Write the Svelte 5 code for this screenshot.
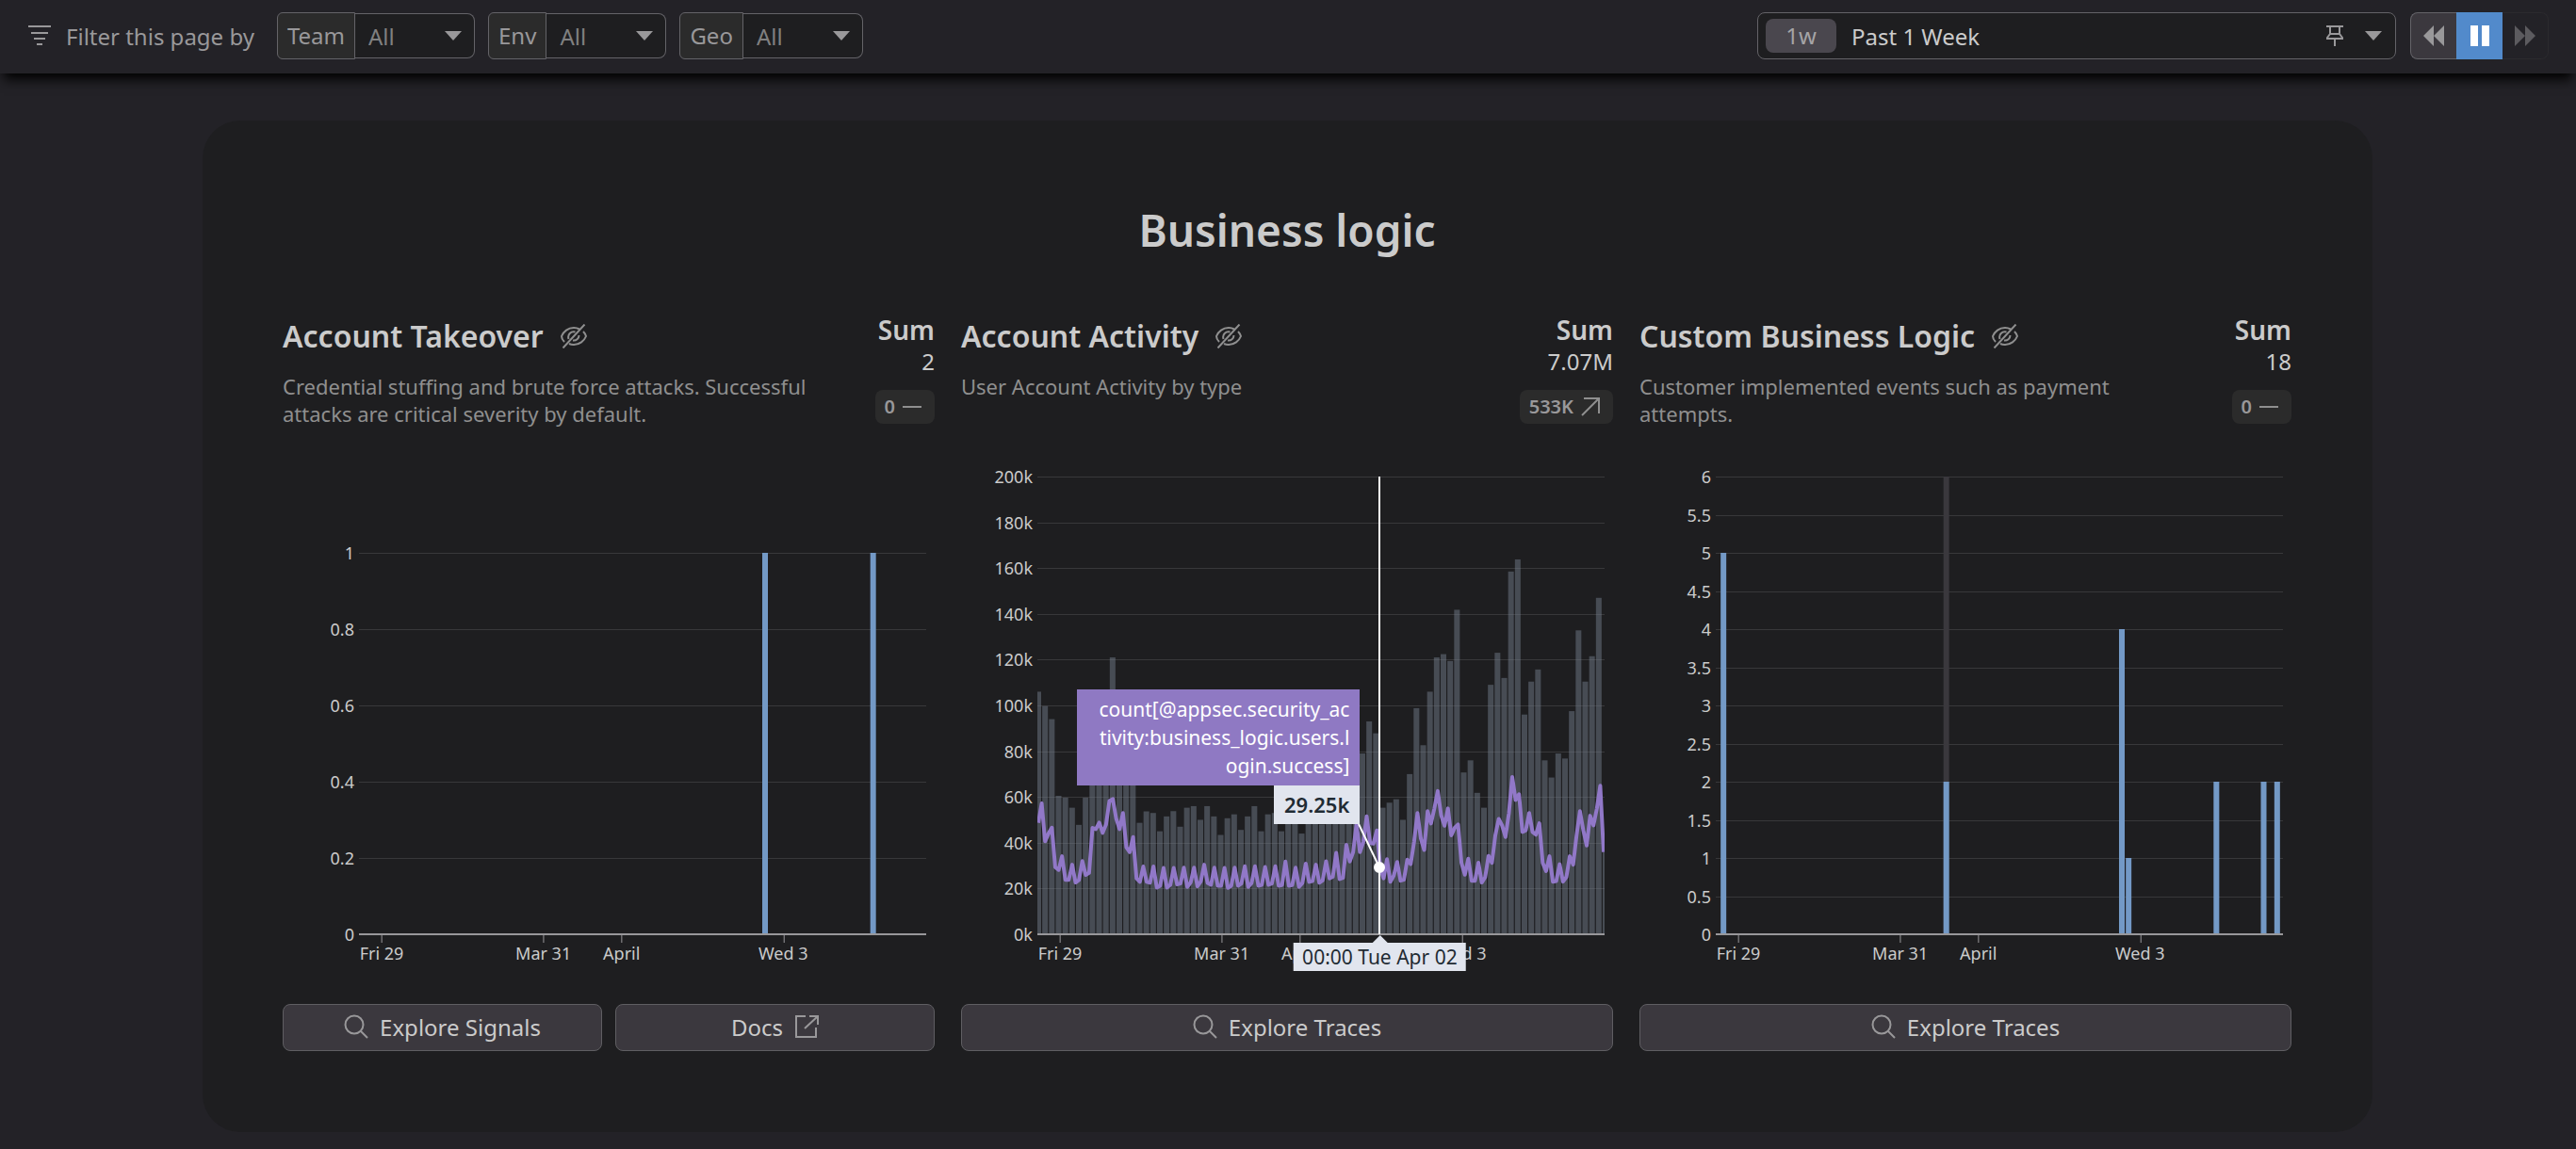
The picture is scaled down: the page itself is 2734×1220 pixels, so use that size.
<script>
  const filters = [
    { id: 'team', label: 'Team' },
    { id: 'env', label: 'Env' },
    { id: 'geo', label: 'Geo' }
  ];

  const days = [
    { label: 'Fri 29', at: 4 },
    { label: 'Mar 31', at: 32.5 },
    { label: 'April', at: 46.3 },
    { label: 'Wed 3', at: 74.8 }
  ];

  // Bar values in thousands, one per two-hour bucket.
  const activity = [
    106, 99.7, 94, 60.5, 59.7, 55.3, 47.8, 59.7, 78, 84, 92, 121, 96, 88, 74, 48.7, 53.7, 53, 45, 51.5, 53.8, 47,
    55.3, 56, 50, 56, 51.5, 43.4, 50.7, 52.4, 45.6, 51.5, 56, 45, 52.4, 53, 45, 52, 54, 44, 52, 53, 48, 54, 56, 55,
    60, 66, 79, 93, 87.8, 55.3, 57.5, 59, 50, 70, 98.8, 82.6, 106, 121, 122.4, 119.4, 141.8, 70.7, 76, 61.8, 55.3,
    109, 123, 112, 158.5, 163.8, 96, 110.4, 115.7, 76, 68.5, 79, 76.8, 97.5, 132.8, 110.4, 121.5, 147, 36
  ];

  // Successful logins in thousands, one per hour.
  const logins = [
    48.7, 57.2, 40.6, 44, 46.6, 29.3, 28.1, 34.1, 23.8, 23.8, 30.4, 22.6, 23.7, 32, 25.9, 26.8, 46.5, 45.9, 48.8,
    44.3, 47.9, 58.2, 59.1, 50.6, 45.9, 53, 38, 35.9, 42.5, 24.4, 22.9, 29.6, 22.9, 22.5, 29.6, 20.4, 21.2, 29, 20.4,
    21.6, 29, 21.8, 22.2, 29.1, 20.7, 22.6, 29.1, 20.9, 23.1, 30.4, 22.4, 21.6, 29.1, 21.2, 21.2, 29, 20.3, 21.2,
    29.1, 21.2, 22.2, 29.7, 20.7, 22.4, 29.7, 21.2, 21.6, 29.4, 21.6, 22.2, 29.7, 21.2, 21.5, 31.8, 21.2, 21.5, 29.1,
    20.7, 22.4, 30.9, 22.9, 23.2, 30.4, 22.5, 23.5, 31.9, 24.4, 25.1, 35.6, 24.1, 24.6, 39.1, 31.8, 35.9, 48.4, 35.9,
    40.3, 51.5, 39.9, 39.6, 45.4, 29.3, 24.4, 32.8, 22.9, 25.6, 31.6, 23.4, 23.8, 32.6, 30.7, 40.3, 53, 41.8, 36.8,
    53.8, 48.4, 55, 62.6, 52, 47.4, 55, 43.2, 46.5, 48, 31.2, 26, 33, 23.4, 23.4, 31.3, 22.6, 24.9, 34.3, 31.2, 43.2,
    50.4, 47.6, 42.5, 52.8, 68.7, 58.7, 61.2, 44.7, 45.4, 53, 44.7, 43.5, 48.5, 31.2, 27.6, 34.1, 22.9, 23.2, 30.6,
    23, 25, 34.1, 30.4, 43.2, 53.8, 45.4, 38.8, 51.8, 47.6, 55, 64.9, 35.9
  ];

  const cards = [
    {
      title: 'Account Takeover',
      text: 'Credential stuffing and brute force attacks. Successful attacks are critical severity by default.',
      sum: '2',
      delta: '0',
      trend: 'flat',
      max: 1.2,
      ticks: ['', '1', '0.8', '0.6', '0.4', '0.2', '0'],
      bars: [[60, 1], [76, 1]],
      actions: [
        { label: 'Explore Signals', icon: 'search' },
        { label: 'Docs', icon: 'external' }
      ]
    },
    {
      title: 'Account Activity',
      text: 'User Account Activity by type',
      sum: '7.07M',
      delta: '533K',
      trend: 'up',
      max: 200,
      ticks: ['200k', '180k', '160k', '140k', '120k', '100k', '80k', '60k', '40k', '20k', '0k'],
      bars: activity.map((v, k) => [k, v]),
      muted: true,
      line: logins,
      actions: [{ label: 'Explore Traces', icon: 'search' }]
    },
    {
      title: 'Custom Business Logic',
      text: 'Customer implemented events such as payment attempts.',
      sum: '18',
      delta: '0',
      trend: 'flat',
      max: 6,
      ticks: ['6', '5.5', '5', '4.5', '4', '3.5', '3', '2.5', '2', '1.5', '1', '0.5', '0'],
      bars: [[1, 5], [34, 2], [60, 4], [61, 1], [74, 2], [81, 2], [83, 2]],
      hover: 34,
      actions: [{ label: 'Explore Traces', icon: 'search' }]
    }
  ];

  const W = 601;
  const H = 486;
  const PITCH = W / 84;
  const barX = (k) => k * PITCH - 2;
  const linePoints = (values, max) =>
    values.map((v, i) => `${1 + (i * (W - 2)) / (values.length - 1)},${H - (v / max) * H}`).join(' ');
</script>

{#snippet caret()}
  <svg class="caret" width="18" height="10" viewBox="0 0 18 10" aria-hidden="true"><path d="M0 0h18L9 10z" /></svg>
{/snippet}

<header class="bar">
  <svg class="funnel" width="24" height="24" viewBox="0 0 24 24" aria-hidden="true">
    <path d="M0 2h24M3 9h18M6 15h12M9 21h6" />
  </svg>
  <span class="hint">Filter this page by</span>
  <div class="filters">
    {#each filters as f}
      <div class="filter">
        <label for={f.id}>{f.label}</label>
        <div class="pick">
          <select id={f.id}><option>All</option></select>
          {@render caret()}
        </div>
      </div>
    {/each}
  </div>

  <button class="range" type="button">
    <span class="chip">1w</span>
    <span class="period">Past 1 Week</span>
    <svg class="pin" width="20" height="22" viewBox="0 0 20 22" aria-hidden="true">
      <path d="M1 1h18M5 1v8M15 1v8M5 9h10l3 4v1H2v-1zM10 14v8" />
    </svg>
    {@render caret()}
  </button>
  <div class="play">
    <button type="button" aria-label="Back">
      <svg width="24" height="24" viewBox="0 0 24 24"><path d="M12 1v22L1 12zM23 1v22L12 12z" /></svg>
    </button>
    <button class="on" type="button" aria-label="Pause">
      <svg width="20" height="22" viewBox="0 0 20 22"><path d="M0 0h8v22H0zM12 0h8v22h-8z" /></svg>
    </button>
    <button class="off" type="button" aria-label="Forward" disabled>
      <svg width="24" height="24" viewBox="0 0 24 24"><path d="M1 1v22l11-11zM12 1v22l11-11z" /></svg>
    </button>
  </div>
</header>

<main>
  <section class="panel">
    <h1>Business logic</h1>
    <div class="cards">
      {#each cards as c}
        <article>
          <div class="head">
            <div class="about">
              <h2>
                {c.title}
                <svg class="eye" width="28" height="26" viewBox="0 0 28 26" aria-hidden="true">
                  <path d="M4 19C2 17 1 14.500 1 13c2-5 7-9 13-9 2 0 4 .4 6 1.500M24 8c1.500 1.500 2.500 3.500 3 5-2 5-7 9-13 9-2 0-3.500-.3-5-1" />
                  <path d="M8.500 16C7 11 11 7.500 15.500 8.500M19.500 12c0 3.500-3 6-6.500 5.500M2.500 25.500l23-25" />
                </svg>
              </h2>
              <p>{c.text}</p>
            </div>
            <div class="stats">
              <strong>Sum</strong>
              <span class="total">{c.sum}</span>
              <span class="delta">
                {c.delta}
                <svg width="20" height="20" viewBox="0 0 20 20" aria-hidden="true">
                  <path d={c.trend === 'up' ? 'M3 1h16v16M19 1L1 19' : 'M0 10h20'} />
                </svg>
              </span>
            </div>
          </div>

          <div class="chart">
            <div class="yaxis">
              {#each c.ticks as t}<span>{t}</span>{/each}
            </div>
            <div class="plot">
              <svg class="graph" viewBox="0 0 {W} {H}" preserveAspectRatio="none" aria-hidden="true">
                {#each c.ticks as t, i}
                  {#if t}
                    <rect class="rule" x="0" y={Math.round((i * H) / (c.ticks.length - 1))} width={W} height="1" />
                  {/if}
                {/each}
                {#if c.hover}
                  <rect class="hover" x={barX(c.hover)} y="0" width="6" height={H} />
                {/if}
                {#each c.bars as [k, v]}
                  <rect class="col" class:muted={c.muted} x={barX(k)} y={H - (v / c.max) * H} width="6" height={(v / c.max) * H} />
                {/each}
                {#if c.line}
                  <polyline points={linePoints(c.line, c.max)} />
                {/if}
              </svg>
              <div class="xaxis">
                {#each days as d}
                  <span style="left: {d.at}%">{d.label}</span>
                {/each}
              </div>
              {#if c.line}
                <div class="cursor">
                  <svg class="leader" width="32" height="56" viewBox="0 0 32 56" aria-hidden="true">
                    <path d="M3 3l22 46" /><circle cx="25" cy="49" r="5" />
                  </svg>
                  <div class="tip">
                    <span class="series">count[@appsec.security_activity:business_logic.users.login.success]</span>
                    <span class="value">29.25k</span>
                  </div>
                  <time>00:00 Tue Apr 02</time>
                </div>
              {/if}
            </div>
          </div>

          <div class="actions">
            {#each c.actions as a}
              <button type="button">
                {#if a.icon === 'search'}
                  <svg width="26" height="26" viewBox="0 0 26 26" aria-hidden="true">
                    <circle cx="11" cy="11" r="9.500" /><path d="M17.500 17.500l7.500 7.500" />
                  </svg>
                {/if}
                {a.label}
                {#if a.icon === 'external'}
                  <svg width="26" height="26" viewBox="0 0 26 26" aria-hidden="true">
                    <path d="M12 2H2v22h21V14M16 2h9v9M25 2L11 15" />
                  </svg>
                {/if}
              </button>
            {/each}
          </div>
        </article>
      {/each}
    </div>
  </section>
</main>

<style>
  :global(body) {
    background: #232227;
    color: #cbcbcb;
    font-family: 'Noto Sans', sans-serif;
    font-size: 24px;
  }
  button,
  select {
    font: inherit;
    color: inherit;
    box-sizing: border-box;
  }
  svg {
    flex: none;
  }

  .bar {
    position: relative;
    display: flex;
    align-items: center;
    height: 78px;
    padding: 0 29px 2px 30px;
    box-sizing: border-box;
    background: #232227;
    box-shadow: 0 10px 12px -4px #000;
  }
  .funnel path {
    stroke: #99989a;
    stroke-width: 2;
  }
  .hint {
    margin: 0 24px 0 16px;
    color: #99989a;
  }
  .filters {
    display: flex;
    gap: 14px;
  }
  .filter {
    display: flex;
    align-items: center;
  }
  .filter label {
    height: 50px;
    padding: 0 10px;
    box-sizing: border-box;
    border: 1px solid #646368;
    border-radius: 6px 0 0 6px;
    background: #2b2b2b;
    color: #99989a;
    line-height: 48px;
  }
  .pick {
    position: relative;
  }
  .pick select {
    appearance: none;
    width: 127px;
    height: 48px;
    padding: 0 14px;
    border: 1px solid #646368;
    border-left: 0;
    border-radius: 0 8px 8px 0;
    background: #1e1e20;
    color: #808080;
  }
  .pick .caret {
    position: absolute;
    right: 14px;
    top: 19px;
    pointer-events: none;
  }
  .caret {
    fill: #99989a;
  }
  .range {
    display: flex;
    align-items: center;
    width: 678px;
    height: 50px;
    margin-left: auto;
    padding: 0 14px 0 8px;
    border: 1px solid #646368;
    border-radius: 8px;
    background: #1e1e20;
    text-align: left;
  }
  .chip {
    width: 75px;
    border-radius: 8px;
    background: #4a474e;
    color: #a5a4a6;
    line-height: 36px;
    text-align: center;
  }
  .period {
    flex: 1;
    margin-left: 16px;
  }
  .pin {
    margin-right: 22px;
    fill: none;
    stroke: #99989a;
    stroke-width: 2;
  }
  .play {
    display: flex;
    margin-left: 15px;
  }
  .play button {
    display: grid;
    place-items: center;
    width: 49px;
    height: 50px;
    padding: 0;
    border: 1px solid #646368;
    border-right: 0;
    border-radius: 8px 0 0 8px;
    background: #3b383e;
    fill: #99989a;
  }
  .play .on {
    border-color: #528dcc;
    border-radius: 0;
    background: #528acb;
    fill: #fff;
  }
  .play .off {
    border: 1px solid #2b2a2e;
    border-left: 0;
    border-radius: 0 8px 8px 0;
    background: #232227;
    fill: #5c5b5f;
  }

  main {
    padding: 50px 216px 18px 215px;
  }
  .panel {
    padding: 81px 86px 86px 85px;
    border-radius: 40px;
    background: #1e1e20;
  }
  h1 {
    margin: 0 0 51px;
    font-size: 46px;
    font-weight: 600;
    line-height: 70px;
    text-align: center;
  }
  .cards {
    display: grid;
    grid-template-columns: repeat(3, minmax(0, 1fr));
    gap: 28px;
  }
  .head {
    display: flex;
    justify-content: space-between;
    gap: 28px;
    min-height: 126px;
  }
  .about {
    max-width: 560px;
  }
  h2 {
    display: flex;
    align-items: center;
    gap: 18px;
    margin: 0;
    padding-top: 3px;
    font-size: 32px;
    font-weight: 600;
    line-height: 48px;
  }
  .eye {
    fill: none;
    stroke: #8f8f8f;
    stroke-width: 2;
  }
  .about p {
    margin: 15px 0 0;
    color: #8f8f8f;
    font-size: 22px;
    line-height: 29px;
  }
  .stats {
    display: flex;
    flex-direction: column;
    align-items: flex-end;
  }
  .stats strong {
    font-size: 28px;
    font-weight: 600;
    line-height: 40px;
  }
  .total {
    line-height: 28px;
  }
  .delta {
    display: flex;
    align-items: center;
    gap: 8px;
    margin-top: 16px;
    padding: 0 14px 0 10px;
    border-radius: 8px;
    background: #2b2b2b;
    color: #99989a;
    font-size: 20px;
    font-weight: 600;
    line-height: 36px;
  }
  .delta svg {
    stroke: #8f8f8f;
    stroke-width: 2;
    fill: none;
  }

  .chart {
    display: flex;
    margin: 50px 9px 42px 0;
    font-size: 18px;
  }
  .yaxis {
    display: flex;
    flex-direction: column;
    justify-content: space-between;
    width: 76px;
    height: 486px;
    margin-right: 5px;
    text-align: right;
  }
  .yaxis span {
    height: 0;
    line-height: 0;
  }
  .plot {
    position: relative;
    flex: 1;
  }
  .graph {
    display: block;
    width: 100%;
    height: 486px;
    overflow: hidden;
  }
  .rule {
    fill: #38383a;
  }
  .hover {
    fill: #3a383d;
  }
  .col {
    fill: #7399c6;
  }
  .muted {
    fill: rgba(121, 134, 148, 0.45);
  }
  polyline {
    fill: none;
    stroke: #9178c8;
    stroke-width: 4;
    stroke-linejoin: round;
  }
  .xaxis {
    position: relative;
    height: 31px;
    margin-top: -1px;
    border-top: 2px solid #98979a;
  }
  .xaxis span {
    position: absolute;
    padding-top: 7px;
    line-height: 24px;
    white-space: nowrap;
    transform: translateX(-50%);
  }
  .xaxis span::before {
    content: '';
    position: absolute;
    left: 50%;
    top: 0;
    height: 8px;
    border-left: 1px solid #98979a;
  }
  .cursor {
    position: absolute;
    left: 60.200%;
    top: 0;
    height: 486px;
    border-left: 2px solid #fff;
  }
  .tip {
    position: absolute;
    right: 22px;
    top: 226px;
    display: flex;
    flex-direction: column;
    align-items: flex-end;
    width: 300px;
    font-size: 21px;
    line-height: 30px;
    text-align: right;
  }
  .series {
    padding: 6px 11px 6px 20px;
    box-sizing: border-box;
    width: 100%;
    background: #8f79c3;
    color: #fff;
    word-break: break-all;
  }
  .value {
    padding: 5px 11px 6px;
    background: #e1e5ee;
    color: #1f2b33;
    font-size: 22px;
    font-weight: 600;
  }
  .leader {
    position: absolute;
    right: -6px;
    top: 366px;
    stroke: #fff;
    stroke-width: 2;
    fill: #fff;
  }
  time {
    position: absolute;
    top: 495px;
    left: -1px;
    padding: 0 9px;
    background: #e1e5ee;
    color: #1f2b33;
    font-size: 21px;
    line-height: 30px;
    white-space: nowrap;
    transform: translateX(-50%);
  }
  time::before {
    content: '';
    position: absolute;
    left: 50%;
    bottom: 100%;
    margin-left: -8px;
    border: 8px solid transparent;
    border-top: 0;
    border-bottom-color: #e1e5ee;
  }

  .actions {
    display: flex;
    gap: 14px;
  }
  .actions button {
    display: flex;
    flex: 1;
    align-items: center;
    justify-content: center;
    gap: 12px;
    height: 50px;
    padding: 0 6px 2px;
    border: 1px solid #5f5e62;
    border-radius: 8px;
    background: #3b383e;
  }
  .actions svg {
    fill: none;
    stroke: #99989a;
    stroke-width: 2;
  }
</style>
